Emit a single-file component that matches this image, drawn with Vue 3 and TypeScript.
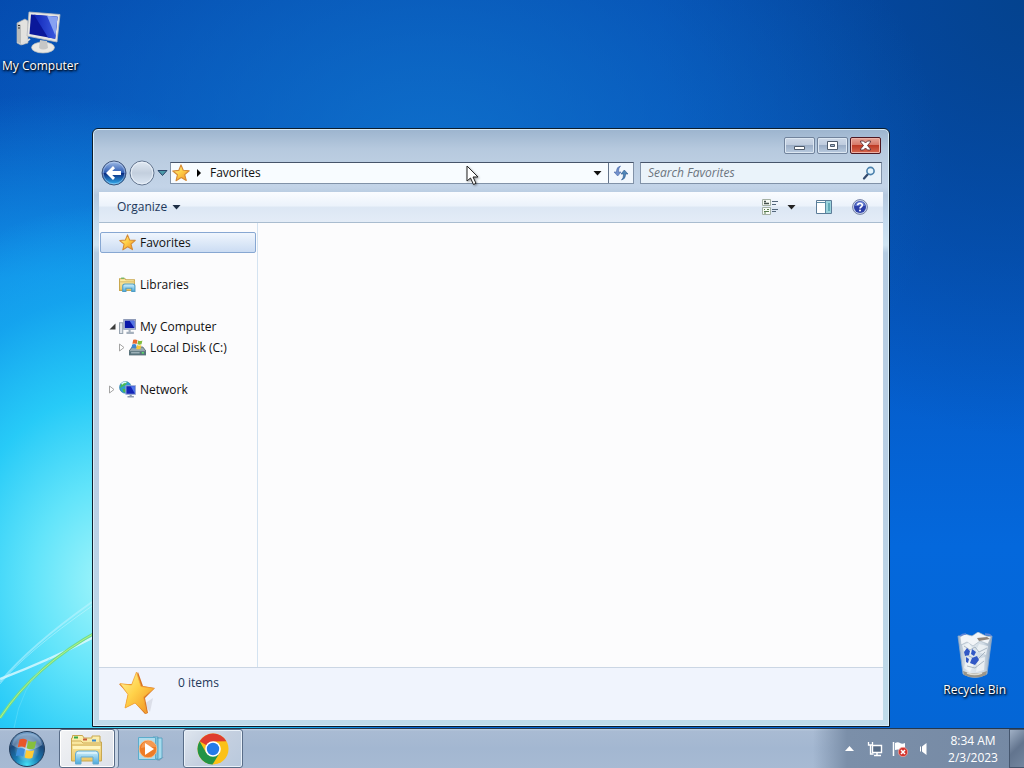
<script setup lang="ts">
import { ref } from 'vue'

interface TreeItem {
  label: string
  icon: string
  state?: 'open' | 'closed'
  child?: boolean
}

const groups: TreeItem[][] = [
  [{ label: 'Favorites', icon: 'star' }],
  [{ label: 'Libraries', icon: 'library' }],
  [
    { label: 'My Computer', icon: 'computer', state: 'open' },
    { label: 'Local Disk (C:)', icon: 'disk', state: 'closed', child: true },
  ],
  [{ label: 'Network', icon: 'network', state: 'closed' }],
]

const selected = ref('Favorites')
const query = ref('')
</script>

<template>
  <div class="screen">
    <svg class="defs" aria-hidden="true">
      <defs>
        <linearGradient id="gold" x1="0" y1="0" x2="1" y2="1">
          <stop offset="0" stop-color="#fff3a0" />
          <stop offset=".45" stop-color="#ffd24a" />
          <stop offset="1" stop-color="#f08a1d" />
        </linearGradient>
        <linearGradient id="screen-blue" x1="0" y1="0" x2="1" y2="0">
          <stop offset="0" stop-color="#1026b8" />
          <stop offset="1" stop-color="#3c5de0" />
        </linearGradient>
        <linearGradient id="folder" x1="0" y1="0" x2="0" y2="1">
          <stop offset="0" stop-color="#fdf3b4" />
          <stop offset="1" stop-color="#edc766" />
        </linearGradient>
        <linearGradient id="stand" x1="0" y1="0" x2="0" y2="1">
          <stop offset="0" stop-color="#d5f2fd" />
          <stop offset="1" stop-color="#4aa9dc" />
        </linearGradient>
        <linearGradient id="back" x1="0" y1="0" x2="0" y2="1">
          <stop offset="0" stop-color="#a5bfe8" />
          <stop offset=".48" stop-color="#2f5db4" />
          <stop offset=".5" stop-color="#08267c" />
          <stop offset="1" stop-color="#35b6f4" />
        </linearGradient>
        <linearGradient id="forward" x1="0" y1="0" x2="0" y2="1">
          <stop offset="0" stop-color="#e2eaf3" />
          <stop offset=".5" stop-color="#c3cfde" />
          <stop offset="1" stop-color="#dce7f4" />
        </linearGradient>
        <radialGradient id="orb" cx=".5" cy=".95" r=".9">
          <stop offset="0" stop-color="#45e0f5" />
          <stop offset=".4" stop-color="#1878b0" />
          <stop offset=".75" stop-color="#1c4778" />
          <stop offset="1" stop-color="#6d9ac4" />
        </radialGradient>
        <radialGradient id="flag-glow">
          <stop offset="0" stop-color="#fff" stop-opacity=".75" />
          <stop offset="1" stop-color="#fff" stop-opacity="0" />
        </radialGradient>
        <linearGradient id="bin" x1="0" y1="0" x2="1" y2="0">
          <stop offset="0" stop-color="#a9b9c9" />
          <stop offset=".3" stop-color="#e3eaf0" />
          <stop offset=".75" stop-color="#ced9e3" />
          <stop offset="1" stop-color="#8fa3b8" />
        </linearGradient>

        <symbol id="star" viewBox="0 0 16 16">
          <path d="M8 .8 10 5.600l5.300.4-4 3.500 1.400 5.200L8.200 12l-4.600 2.900 1.200-5.300L.7 6.200l5.300-.5z" fill="url(#gold)" stroke="#d58a35" stroke-width="1" stroke-linejoin="round" />
        </symbol>
        <symbol id="library" viewBox="0 0 16 16">
          <path d="M.5 2.500h5l1 1h8v10H.5z" fill="url(#folder)" stroke="#c9a850" />
          <path d="M2 2h3" stroke="#56b056" stroke-width="1" />
          <path d="M1 5.500h14" stroke="#d9bd68" />
          <path d="M3.500 14.500v-5q0-2 2-2h7.500q2 0 2 2v5h-3v-3h-5.500v3z" fill="url(#stand)" stroke="#4f9dc4" />
        </symbol>
        <symbol id="computer" viewBox="0 0 16 16">
          <path d="M.5 4.500h3v10h-3z" fill="#dfe5eb" stroke="#97a3b0" />
          <path d="M4.500 1.500h11v9h-11z" fill="#c5cde2" stroke="#8f9bb8" />
          <path d="M5.500 2.500h9v7h-9z" fill="#0a16a8" />
          <path d="M10 2.500h4.500v7z" fill="#5476e4" />
          <path d="M9 11h2v2h3v2H7v-2h2z" fill="#a5b0bd" />
        </symbol>
        <symbol id="disk" viewBox="0 0 16 16">
          <path d="m3 7.500-3 4V15h16v-3.500l-3-4z" fill="#98a8ae" stroke="#53656b" stroke-width=".8" />
          <path d="M0 11.500h16V15H0z" fill="#57727b" />
          <path d="M2 13h8" stroke="#b9cad0" />
          <path d="M12 13h2" stroke="#5be06a" stroke-width="1.500" />
          <path d="M4 .8q2-.9 4 .3L7.200 4.700Q5.300 3.700 3.200 4.500z" fill="#e9692c" />
          <path d="M8.600 1.400q2 1 4-.1L11.800 5q-2 .9-4 0z" fill="#83bd3d" />
          <path d="M3 5.200q2-.9 4 .2L6.200 9q-2-1-4-.2z" fill="#3c87d2" />
          <path d="M7.600 5.700q2 1 4 0l-.8 3.600q-2 .9-4 0z" fill="#f5c73b" />
        </symbol>
        <symbol id="network" viewBox="0 0 16 16">
          <circle cx="6" cy="6" r="5.500" fill="#2e9fd0" stroke="#2779a8" stroke-width=".6" />
          <path d="M2 3q3-3 6-2L6 4 3 5.500 1 7zM3 7l4 1-1 3-2-1z" fill="#49b853" />
          <path d="M2.500 3q2-2.500 4.500-1.500" stroke="#d8f8fd" stroke-width="1.500" fill="none" />
          <path d="M6.500 4.500h9v8h-9z" fill="#1425b8" stroke="#9aaad2" />
          <path d="M11 5h4v7z" fill="#4f76ea" />
          <path d="M10 13h2v1h2v1.500H8V14h2z" fill="#8c9ab0" />
        </symbol>
      </defs>
    </svg>

    <main class="desktop">
      <svg class="streaks" viewBox="0 0 160 200" aria-hidden="true">
        <path d="M0 151Q50 132 92 110T160 82" stroke="#e9fcff" stroke-width="2.500" fill="none" opacity=".75" />
        <path d="M0 154Q30 118 92 74" stroke="#c5f5ff" stroke-width="2" fill="none" opacity=".5" />
        <path d="M0 156Q26 124 92 78" stroke="#e2fbff" stroke-width="1" fill="none" opacity=".4" />
        <path d="M0 190Q34 138 100 102" stroke="#6fdc90" stroke-width="3" fill="none" />
        <path d="M0 190Q34 138 100 102" stroke="#b6f380" stroke-width="1" fill="none" />
        <path d="M14 200Q20 160 50 130" stroke="#7ae6fb" stroke-width="1" fill="none" opacity=".4" />
      </svg>

      <a class="shortcut shortcut-computer" href="#computer">
        <svg width="48" height="46" viewBox="0 0 48 46" aria-hidden="true">
          <path d="m1 13 8-4 3 2v22l-7 2-4-2z" fill="#e3e2df" stroke="#a9adb0" stroke-width=".7" />
          <path d="m1 13 4 2v19l-4-2z" fill="#b9bbbb" />
          <path d="M2 15.500h2M2 18h2" stroke="#333" />
          <path d="m14 29-8 5" stroke="#ddd" stroke-width="2" />
          <ellipse cx="27" cy="37.500" rx="11.500" ry="5.500" fill="#e9e8e4" stroke="#b8bbbc" stroke-width=".7" />
          <path d="m24 30 7 1 1 7q-5 3-9 0z" fill="#c6c7c6" />
          <path d="m13 2 31 2.500-3 27.500-30-6z" fill="#e6e6e4" stroke="#b5b9be" stroke-width=".8" />
          <path d="m15 4.500 26.500 2.200-2.300 22.100L13.500 24z" fill="#0a189a" />
          <path d="m18 4.800 23.500 1.900-2.300 22.100L32 27.500z" fill="url(#screen-blue)" />
          <path d="m31 5.800 10.500.9-2 19z" fill="#87a2f2" />
        </svg>
        <span>My Computer</span>
      </a>

      <a class="shortcut shortcut-bin" href="#bin">
        <svg width="40" height="48" viewBox="0 0 40 48" aria-hidden="true">
          <path d="m3 4 5 38q12 7 24 0l5-38z" fill="url(#bin)" stroke="#8fa9c8" stroke-width=".8" />
          <path d="m5 5 5-3 7 2 6-4 8 4 5 1-3 7-8-3-7 5-6-4-6 3z" fill="#f2f5f8" stroke="#a2b1c0" stroke-width=".6" />
          <path d="m7 13 7-2 5 8-9 5zm17-1 9 2-2 9-10-4zM11 27l8 5-4 8-6-4zm12 0 7-2-1 13-8 2z" fill="#f5f8fa" opacity=".7" />
          <path d="m9 14 6 4 5-3 4 5 8-4M12 34l8 2 9-7m-17-6 10 5 8-8" stroke="#9aa9b8" fill="none" stroke-width=".8" />
          <path d="m22 6 10-1 3 2-11 2z" fill="#77695d" opacity=".8" />
          <path d="m9 20 3-4 3 3-1 4-4 1zm8-3 4 3-2 4-3-2zm0 9 5-2 2 4-4 5-5-2zm-6-1 3 2-1 4-2-1z" fill="#3158c5" />
          <path d="M5 4q2-2 6-2m19 0q5 0 6 2" stroke="#5f86d8" stroke-width="1.500" fill="none" />
          <path d="m8 39q12 5 24 0l-1 4q-11 5-22 0z" fill="#99958a" />
          <path d="m12 41q8 3 15 0" stroke="#dfddd3" stroke-width="1.500" fill="none" />
        </svg>
        <span>Recycle Bin</span>
      </a>

      <section class="window" aria-label="Favorites">
        <header class="titlebar">
          <button class="caption" type="button" aria-label="Minimize">
            <svg width="13" height="11" viewBox="0 0 13 11"><path d="M1.500 6.500h10v3h-10z" fill="#fff" stroke="#4f5b6b" /></svg>
          </button>
          <button class="caption" type="button" aria-label="Maximize">
            <svg width="13" height="11" viewBox="0 0 13 11"><path d="M1.500 1.500h10v8h-10z" fill="#fff" stroke="#4f5b6b" /><path d="M4.500 4.500h4v2h-4z" fill="#a8b9cf" stroke="#4f5b6b" /></svg>
          </button>
          <button class="caption close" type="button" aria-label="Close">
            <svg width="13" height="11" viewBox="0 0 13 11"><path d="M1.500 1h3l2 2 2-2h3v1L8.500 5.500l3 3.500v1h-3l-2-2-2 2h-3V9l3-3.500-3-3.500z" fill="#fff" stroke="#5e3038" stroke-width=".9" /></svg>
          </button>
        </header>

        <div class="navigation">
          <div class="travel">
            <button type="button" aria-label="Back">
              <svg width="26" height="26" viewBox="0 0 26 26">
                <circle cx="13" cy="13" r="12" fill="url(#back)" stroke="#43577c" />
                <circle cx="13" cy="13" r="10.800" fill="none" stroke="#c9dcf5" opacity=".5" />
                <path d="m5 13 7-7 2 2.200L11.200 11H20v4h-8.800l2.800 2.800L12 20z" fill="#fff" />
              </svg>
            </button>
            <button type="button" aria-label="Forward">
              <svg width="26" height="26" viewBox="0 0 26 26">
                <circle cx="13" cy="13" r="12" fill="url(#forward)" stroke="#64768f" />
                <circle cx="13" cy="13" r="10.800" fill="none" stroke="#edf4fb" opacity=".8" />
              </svg>
            </button>
            <button class="history" type="button" aria-label="Recent pages">
              <svg width="11" height="8" viewBox="0 0 11 8"><path d="M1 1.500h9L5.500 6.500z" fill="#4b9aa9" stroke="#2a4468" /></svg>
            </button>
          </div>

          <div class="address">
            <svg class="address-icon" width="18" height="18" aria-hidden="true"><use href="#star" /></svg>
            <button class="crumb" type="button">
              <svg width="6" height="8" viewBox="0 0 6 8" aria-hidden="true"><path d="M1 0v8l4-4z" fill="#000" /></svg>
              <span>Favorites</span>
            </button>
            <button class="drop" type="button" aria-label="Previous locations">
              <svg width="9" height="5" viewBox="0 0 9 5"><path d="M.5 0h8l-4 4.500z" fill="#111" /></svg>
            </button>
            <button class="refresh" type="button" aria-label="Refresh">
              <svg width="16" height="16" viewBox="0 0 16 16">
                <path d="M7.500 1Q3.500 2 3.500 6v1H1l3.700 4L8 7H5.500V6q0-3 2-5z" fill="#7190cc" stroke="#4a68a8" stroke-width=".6" />
                <path d="M8.500 15q4-1 4-5V9H15l-3.700-4L8 9h2.500v1q0 3-2 5z" fill="#4f86b8" stroke="#2f5a90" stroke-width=".6" />
              </svg>
            </button>
          </div>

          <div class="search">
            <input v-model="query" type="text" placeholder="Search Favorites" aria-label="Search Favorites" />
            <button type="button" aria-label="Search">
              <svg width="14" height="14" viewBox="0 0 14 14"><path d="M6 8 2 12.500" stroke="#33496d" stroke-width="2.200" stroke-linecap="round" /><circle cx="8.500" cy="5" r="3.600" fill="#e4f4fd" stroke="#4a80ac" stroke-width="1.600" /></svg>
            </button>
          </div>
        </div>

        <div class="toolbar">
          <button class="organize" type="button">
            Organize
            <svg width="9" height="5" viewBox="0 0 9 5" aria-hidden="true"><path d="M.5 0h8l-4 4.500z" fill="#1e2f45" /></svg>
          </button>
          <button class="views" type="button" aria-label="Change your view">
            <svg width="17" height="16" viewBox="0 0 17 16">
              <path d="M.5.500h8v6h-8zM.5 8.500h8v7h-8z" fill="#f7fbf5" stroke="#a4b0a4" />
              <path d="M2 2.500h2M2 4.500h5" stroke="#44504c" stroke-width="1.500" />
              <path d="M2 10.500h1m2 0h2M2 12.500h5M2 14h2" stroke="#587c50" stroke-width="1.200" />
              <path d="M10 2.500h6M10 5.500h4M10 10.500h6M10 12.500h4" stroke="#53677c" />
            </svg>
            <svg width="9" height="5" viewBox="0 0 9 5"><path d="M.5 0h8l-4 4.500z" fill="#222" /></svg>
          </button>
          <button type="button" aria-label="Show the preview pane">
            <svg width="16" height="14" viewBox="0 0 16 14">
              <path d="M.5.500h15v13H.5z" fill="#fff" stroke="#5b7c98" />
              <path d="M10 1h5v12h-5z" fill="#9bd3dc" /><path d="M12 3h2v8h-2z" fill="#63acb8" />
              <path d="M1 2.500h9M9.500 1v12" stroke="#5b8ba3" />
            </svg>
          </button>
          <button type="button" aria-label="Get help">
            <svg width="16" height="16" viewBox="0 0 16 16">
              <circle cx="8" cy="8" r="7.400" fill="#cbd6ee" stroke="#7480a4" />
              <circle cx="8" cy="8" r="6" fill="#2c3fa8" />
              <path d="M3 7q1-4 5-4.500T13 7q-5-1-10 0z" fill="#6e86d6" />
              <path d="M5.700 6.300Q5.800 4.200 8 4.200t2.300 1.900Q10.300 7.200 9 8q-1 .6-1 1.500" fill="none" stroke="#fff" stroke-width="1.600" /><circle cx="8" cy="11.600" r="1" fill="#fff" />
            </svg>
          </button>
        </div>

        <div class="body">
          <nav class="tree" aria-label="Folders">
            <ul v-for="(group, index) in groups" :key="index">
              <li v-for="item in group" :key="item.label">
                <a
                  href="#folder"
                  :class="{ selected: item.label === selected, child: item.child }"
                  @click.prevent="selected = item.label"
                >
                  <span class="toggle">
                    <svg v-if="item.state === 'open'" width="7" height="7" viewBox="0 0 7 7" aria-hidden="true"><path d="M6.500.500v6h-6z" fill="#3c3c3c" /></svg>
                    <svg v-else-if="item.state === 'closed'" width="6" height="9" viewBox="0 0 6 9" aria-hidden="true"><path d="M.5 1v7L5 4.500z" fill="#fff" stroke="#a3a3a3" /></svg>
                  </span>
                  <svg width="17" height="17" aria-hidden="true"><use :href="'#' + item.icon" /></svg>
                  <span>{{ item.label }}</span>
                </a>
              </li>
            </ul>
          </nav>
          <div class="files"></div>
        </div>

        <footer class="details">
          <svg width="40" height="46" viewBox="0 0 40 46" aria-hidden="true">
            <path d="m26 34 9-6-3 14z" fill="#b8b8c4" opacity=".35" />
            <path d="m20 2 5 14 12 2-10 10 3 15-3 1-10-11-10 5 3-14-9-10 13 0z" fill="#d87422" />
            <path d="m18.500 2 4.500 14.500 13 2-10.500 8.500 3 16.500L17 33 7 38l3-13.500L2 13.500l11.500 1.500z" fill="url(#gold)" stroke="#f3a638" stroke-width=".8" stroke-linejoin="round" />
          </svg>
          <span>0 items</span>
        </footer>
      </section>

      <svg class="pointer" width="14" height="21" viewBox="0 0 14 21" aria-hidden="true">
        <path d="M1 1v15l3.500-3 3 6.500 2.500-1.200-3-6.300h5z" fill="#fff" stroke="#222" stroke-linejoin="round" />
      </svg>
    </main>

    <footer class="taskbar">
      <button class="start" type="button" aria-label="Start">
        <svg width="38" height="38" viewBox="0 0 38 38">
          <circle cx="19" cy="19" r="17.500" fill="url(#orb)" stroke="#233d5c" />
          <path d="M4 15Q6 4 19 3.500T34 15q-7 5-15 5T4 15z" fill="#d6e6f5" opacity=".35" />
          <circle cx="19" cy="19" r="13" fill="url(#flag-glow)" />
          <path d="M11.500 9.500q4-1.800 7.500.500l-1.700 7.700q-3.800-2-7.500-.4z" fill="#e9562a" />
          <path d="M20.300 10.800q3.700 2 8 .2l-1.800 7.500q-4 1.800-7.900-.3z" fill="#86bf3c" />
          <path d="M9.400 18.700q3.800-1.700 7.600.5l-1.800 7.600q-3.800-2.200-7.500-.6z" fill="#3d8fdc" />
          <path d="M18.300 19.900q3.800 2 7.900.3l-1.800 7.500q-4 1.800-7.800-.2z" fill="#ffcb35" />
        </svg>
      </button>
      <button class="task active stacked" type="button" aria-label="File Explorer">
        <svg width="34" height="32" viewBox="0 0 34 32">
          <path d="M2.500 5V2.500h10L14 5h8V3h8v6h1.500v19h-30V5z" fill="url(#folder)" stroke="#c8a851" />
          <path d="M4 4.500h4" stroke="#36a545" stroke-width="2" /><path d="M13 6.500h4" stroke="#c85b3c" stroke-width="2" /><path d="M22 7.500h4" stroke="#3b87c8" stroke-width="2" />
          <path d="M2 8h9l2 2h18M2 12h29" stroke="#d1ae58" fill="none" />
          <path d="M3 13h27v3H3z" fill="#fff5be" />
          <path d="M5.500 31V21q0-3 3-3h17q3 0 3 3v10H23v-7H11v7z" fill="url(#stand)" stroke="#66abcf" />
          <path d="M7 20h20" stroke="#effbff" />
        </svg>
      </button>
      <button class="task" type="button" aria-label="Media Player">
        <svg width="28" height="26" viewBox="0 0 28 26">
          <path d="m19 23 8-2-5 4z" fill="#68819b" opacity=".5" />
          <path d="M20 2h5v20l-5 2zM16 1h5v22h-5z" fill="#a6dbed" stroke="#4b9dbd" stroke-width=".8" />
          <path d="M1.500 1.500h17v22h-17z" fill="#aedced" stroke="#5caccb" />
          <circle cx="11" cy="13" r="8.800" fill="#ee7c26" stroke="#fbc18c" stroke-width=".8" />
          <path d="M4 12q1-6.500 7-7t8 6q-7-1-15 1z" fill="#f8a665" opacity=".7" />
          <path d="m8 7 9 6-9 6z" fill="#fff" />
        </svg>
      </button>
      <button class="task active" type="button" aria-label="Chrome">
        <svg width="32" height="32" viewBox="0 0 32 32">
          <circle cx="16" cy="16" r="15.500" fill="#fbc116" />
          <path d="M16 16 2.600 8.300A15.500 15.500 0 0 1 29.400 8.200L16 8.500z" fill="#df3d2f" />
          <path d="M2.600 8.250 9.300 19.900 16 23.700 15.500 31.500A15.500 15.500 0 0 1 2.600 8.250z" fill="#229447" />
          <path d="m22.800 19.800-7.300 11.700L13 22z" fill="#229447" />
          <circle cx="16" cy="16" r="7.800" fill="#fff" /><circle cx="16" cy="16" r="6.200" fill="#247be8" />
        </svg>
      </button>

      <div class="tray">
        <button type="button" aria-label="Show hidden icons">
          <svg width="9" height="5" viewBox="0 0 9 5"><path d="M4.500 0 9 5H0z" fill="#fff" /></svg>
        </button>
        <button type="button" aria-label="Network status">
          <svg width="16" height="16" viewBox="0 0 16 16">
            <path d="M5.500 4.500h9v7h-9z" fill="#586c86" stroke="#fff" stroke-width="1.400" /><path d="M10 12v2m-3 .5h7" stroke="#fff" stroke-width="1.500" />
            <path d="M1.500 1v3h4V1M3.500 4v9h3" stroke="#fff" stroke-width="1.300" fill="none" />
          </svg>
        </button>
        <button type="button" aria-label="Action Center">
          <svg width="16" height="16" viewBox="0 0 16 16">
            <path d="M1.500 1v14" stroke="#fff" stroke-width="1.500" /><path d="M3 2q3-1.500 5 0t5 0v7q-3 1-5 0T3 9z" fill="#fff" />
            <circle cx="11" cy="11" r="4.700" fill="#d4352e" stroke="#f4b5ae" stroke-width=".7" /><path d="m9 9 4 4m0-4-4 4" stroke="#fff" stroke-width="1.500" />
          </svg>
        </button>
        <button type="button" aria-label="Volume">
          <svg width="16" height="16" viewBox="0 0 16 16"><path d="M3 5.500h2L9.500 2v12L5 10.500H3z" fill="#fff" /><path d="M4.500 5v6" stroke="#71849d" /></svg>
        </button>
        <button class="clock" type="button">
          <time>8:34 AM</time>
          <time>2/3/2023</time>
        </button>
        <button class="peek" type="button" aria-label="Show desktop"></button>
      </div>
    </footer>
  </div>
</template>

<style>
html,
body {
  margin: 0;
  overflow: hidden;
}
</style>

<style scoped>
.screen {
  display: flex;
  flex-direction: column;
  height: 100vh;
  box-sizing: border-box;
  color: #111;
  font-family: "Open Sans", "Noto Sans", sans-serif;
  font-size: 12px;
  line-height: 16px;
}
.screen *,
.screen *::before {
  box-sizing: border-box;
}
.defs {
  position: absolute;
  width: 0;
  height: 0;
}
svg {
  display: block;
  flex: none;
}
button {
  display: flex;
  align-items: center;
  justify-content: center;
  padding: 0;
  border: 0;
  background: none;
  color: inherit;
  font: inherit;
}
a {
  color: inherit;
  text-decoration: none;
}
.desktop {
  position: relative;
  flex: 1;
  min-height: 0;
  overflow: hidden;
  background:
    radial-gradient(ellipse 30% 52% at 11% 80%, #a4f6fa 0%, #62e4fa 26%, rgba(40, 205, 248, 0.95) 50%, rgba(22, 170, 240, 0.7) 76%, rgba(14, 130, 225, 0) 100%),
    radial-gradient(ellipse 40% 62% at 4% 75%, rgba(20, 165, 240, 1) 0%, rgba(18, 150, 236, 0.9) 60%, rgba(8, 100, 205, 0) 100%),
    radial-gradient(ellipse 50% 50% at 42% 22%, rgba(16, 116, 206, 0.85) 0%, rgba(10, 95, 195, 0) 100%),
    radial-gradient(ellipse 36% 60% at 100% 0%, #04438f 0%, rgba(4, 67, 147, 0) 100%),
    linear-gradient(180deg, #044aae 0%, #0556c0 35%, #0468dc 75%, #0466d6 100%);
}
.streaks {
  position: absolute;
  bottom: 0;
  left: 0;
  width: 160px;
  height: 200px;
}
.shortcut {
  position: absolute;
  display: flex;
  flex-direction: column;
  align-items: center;
  color: #fff;
  text-shadow: 1px 1px 2px #000, 0 1px 3px #001;
  white-space: nowrap;
}
.shortcut-computer {
  top: 10px;
  left: 2px;
  gap: 2px;
}
.shortcut-bin {
  right: 18px;
  bottom: 30px;
  gap: 2px;
}
.window {
  position: absolute;
  inset: 128px 134px 1px 92px;
  display: flex;
  flex-direction: column;
  padding: 0 6px 6px;
  border: 1px solid #0d1d2c;
  border-radius: 6px 6px 0 0;
  background: linear-gradient(180deg, #9cb4ce 0, #b6c9de 20px, #bccee2 34px, #c3d4e8 58px, #b5c9df 66px, #c5dbee 94px, #cfe4f2 116px, #b5cce2 124px, #b9cfe4 60%, #bfdbea 100%);
  box-shadow: inset 0 0 0 1px #d8edf9;
}
.titlebar {
  display: flex;
  justify-content: flex-end;
  gap: 2px;
  flex: none;
  height: 31px;
  padding: 8px 2px 0 0;
}
.caption {
  width: 31px;
  height: 17px;
  border: 1px solid #71839c;
  border-radius: 2px;
  background: linear-gradient(180deg, #ced9e8 0, #becbdd 48%, #9dafc7 50%, #b9cbe0 100%);
  box-shadow: inset 0 0 0 1px #dce7f2;
}
.close {
  border-color: #4d1721;
  background: linear-gradient(180deg, #e5a497 0, #d67767 48%, #be3b26 50%, #d5684f 100%);
  box-shadow: inset 0 0 0 1px #eeb2a6;
}
.navigation {
  display: flex;
  align-items: center;
  gap: 6px;
  flex: none;
  height: 26px;
  margin-bottom: 6px;
  padding: 0 1px 0 2px;
}
.travel {
  display: flex;
  align-items: center;
  gap: 2px;
  width: 63px;
}
.address,
.search {
  display: flex;
  height: 22px;
  border: 1px solid #8192a8;
  border-top-color: #46546a;
}
.address {
  flex: 1;
  align-items: center;
  background: #f8fcff;
}
.address-icon {
  margin-left: 1px;
}
.crumb {
  gap: 8px;
  margin-left: 6px;
}
.drop {
  width: 21px;
  height: 20px;
  margin-left: auto;
}
.refresh {
  width: 25px;
  height: 20px;
  border-left: 1px solid #64748b;
  background: #f1f7fd;
}
.search {
  width: 31%;
  background: #eaf3fa;
}
.search input {
  flex: 1;
  min-width: 0;
  padding: 0 7px;
  border: 0;
  outline: 0;
  background: none;
  color: #222;
  font: inherit;
}
.search input::placeholder {
  color: #6c757e;
  font-style: italic;
  opacity: 1;
}
.search button {
  width: 24px;
}
.toolbar {
  display: flex;
  align-items: center;
  gap: 20px;
  flex: none;
  height: 31px;
  padding: 0 15px 0 18px;
  border-bottom: 1px solid #a9bccf;
  background: linear-gradient(180deg, #fafcff 0, #ecf3fb 45%, #dce7f4 52%, #e3ecf7 100%);
  color: #1e395b;
}
.organize {
  gap: 5px;
  margin-right: auto;
}
.views {
  gap: 8px;
}
.body {
  display: flex;
  flex: 1;
  min-height: 0;
  background: #fcfcfd;
}
.tree {
  width: 159px;
  padding: 9px 1px;
  border-right: 1px solid #d4e3f1;
}
.tree ul {
  margin: 0 0 21px;
  padding: 0;
  list-style: none;
}
.tree a {
  display: flex;
  align-items: center;
  height: 21px;
  padding-left: 8px;
  border: 1px solid transparent;
  border-radius: 2px;
  white-space: nowrap;
}
.tree a.child {
  padding-left: 18px;
}
.tree a.selected {
  width: 156px;
  border-color: #87a7d2;
  background: linear-gradient(180deg, #f0f6fd, #cbdcf3);
}
.toggle {
  width: 10px;
}
.tree span:last-child {
  margin-left: 4px;
}
.files {
  flex: 1;
}
.details {
  display: flex;
  gap: 20px;
  flex: none;
  height: 53px;
  padding: 2px 19px;
  border-top: 1px solid #cbd6e4;
  background: #f0f4fd;
  color: #1e395b;
}
.details span {
  margin-top: 5px;
}
.pointer {
  position: absolute;
  top: 165px;
  left: 466px;
  filter: drop-shadow(1px 1px 1px #0006);
}
.taskbar {
  display: flex;
  flex: none;
  height: 40px;
  border-top: 1px solid #26384d;
  background: linear-gradient(180deg, #bfcfe2 0, #a9bbd3 2px, #a3b7d1 50%, #a7bad3 100%);
}
.start {
  width: 54px;
  margin-right: 5px;
}
.task {
  width: 60px;
  margin-right: 2px;
  border: 1px solid transparent;
  border-radius: 3px;
}
.task.active {
  border-color: #596d88;
  background: linear-gradient(135deg, #dfe6ef, #c5d0e0 50%, #b9c9dd);
  box-shadow: inset 0 0 0 1px #e9f1f9;
}
.task.stacked {
  width: 56px;
  margin-right: 6px;
  background: linear-gradient(135deg, #f2f3f5, #dce1e9);
  box-shadow: inset 0 0 0 1px #fff, 3px 0 0 #c5d3e3, 4px 0 0 #647a96;
}
.tray {
  display: flex;
  align-items: center;
  margin-left: auto;
  padding-left: 24px;
  background: linear-gradient(90deg, rgba(113, 134, 160, 0) 0, #7b8fa9 34px, #7589a4 100%);
  color: #fff;
}
.tray button {
  width: 25px;
}
.tray .clock {
  flex-direction: column;
  width: 72px;
  line-height: 17px;
}
.tray .peek {
  align-self: stretch;
  width: 15px;
  border: 1px solid #45566e;
  border-right: 0;
  background: linear-gradient(135deg, #a0b0c5 0, #62748e 50%, #73869f 100%);
}
</style>
